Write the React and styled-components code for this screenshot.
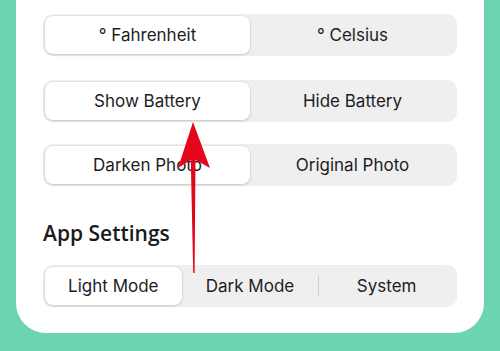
import styled, { createGlobalStyle } from 'styled-components';

const Global = createGlobalStyle`
  html, body { margin: 0; padding: 0; overflow: hidden; }
  body { font-family: Inter, "Open Sans", sans-serif; }
`;

const Page = styled.div`
  position: relative;
  width: 500px;
  height: 351px;
  background: #6cd4b2;
  padding: 0 16px;
  box-sizing: border-box;
`;

const Card = styled.div`
  background: #fff;
  border-radius: 0 0 30px 30px;
  padding: 14px 27px 26px;
  display: flex;
  flex-direction: column;
`;

const Segmented = styled.div`
  display: grid;
  grid-template-columns: repeat(${(p) => p.count}, 1fr);
  align-items: center;
  height: 42px;
  padding: 2px;
  box-sizing: border-box;
  background: #efeff0;
  border-radius: 10px;
  margin-bottom: ${(p) => p.gap || 0}px;
`;

const Option = styled.div`
  height: 100%;
  display: flex;
  align-items: center;
  justify-content: center;
  font-size: 17px;
  color: #1d1d1f;
  border-radius: 8px;
  position: relative;
  background: ${(p) => (p.active ? '#fff' : 'transparent')};
  box-shadow: ${(p) =>
    p.active ? '0 1px 3px rgba(0,0,0,0.16), 0 0 0 0.5px rgba(0,0,0,0.05)' : 'none'};
`;

const Divider = styled.span`
  position: absolute;
  left: 0;
  top: 9px;
  bottom: 9px;
  width: 1px;
  background: #d0d0d3;
`;

const Heading = styled.h2`
  margin: 4px 0 19px;
  font-family: "Open Sans", sans-serif;
  font-weight: 600;
  font-size: 21px;
  line-height: 26px;
  color: #1b1b1b;
`;

const Arrow = styled.svg`
  position: absolute;
  left: 0;
  top: 0;
  pointer-events: none;
`;

const rows = [
  { items: ['° Fahrenheit', '° Celsius'], gap: 24 },
  { items: ['Show Battery', 'Hide Battery'], gap: 22 },
  { items: ['Darken Photo', 'Original Photo'], gap: 30 },
];

export default function App() {
  return (
    <>
      <Global />
      <Page>
        <Card>
          {rows.map((row) => (
            <Segmented key={row.items[0]} count={2} gap={row.gap}>
              {row.items.map((t, i) => (
                <Option key={t} active={i === 0}>
                  {t}
                </Option>
              ))}
            </Segmented>
          ))}
          <Heading>App Settings</Heading>
          <Segmented count={3}>
            <Option active>Light Mode</Option>
            <Option>Dark Mode</Option>
            <Option>
              <Divider />
              System
            </Option>
          </Segmented>
        </Card>
        <Arrow width="500" height="351" viewBox="0 0 500 351">
          <path
            d="M193 122 L210 168 L195.5 160 L194.6 273 L193.2 273 L190.8 160 L178 168 Z"
            fill="#e4061a"
          />
        </Arrow>
      </Page>
    </>
  );
}
